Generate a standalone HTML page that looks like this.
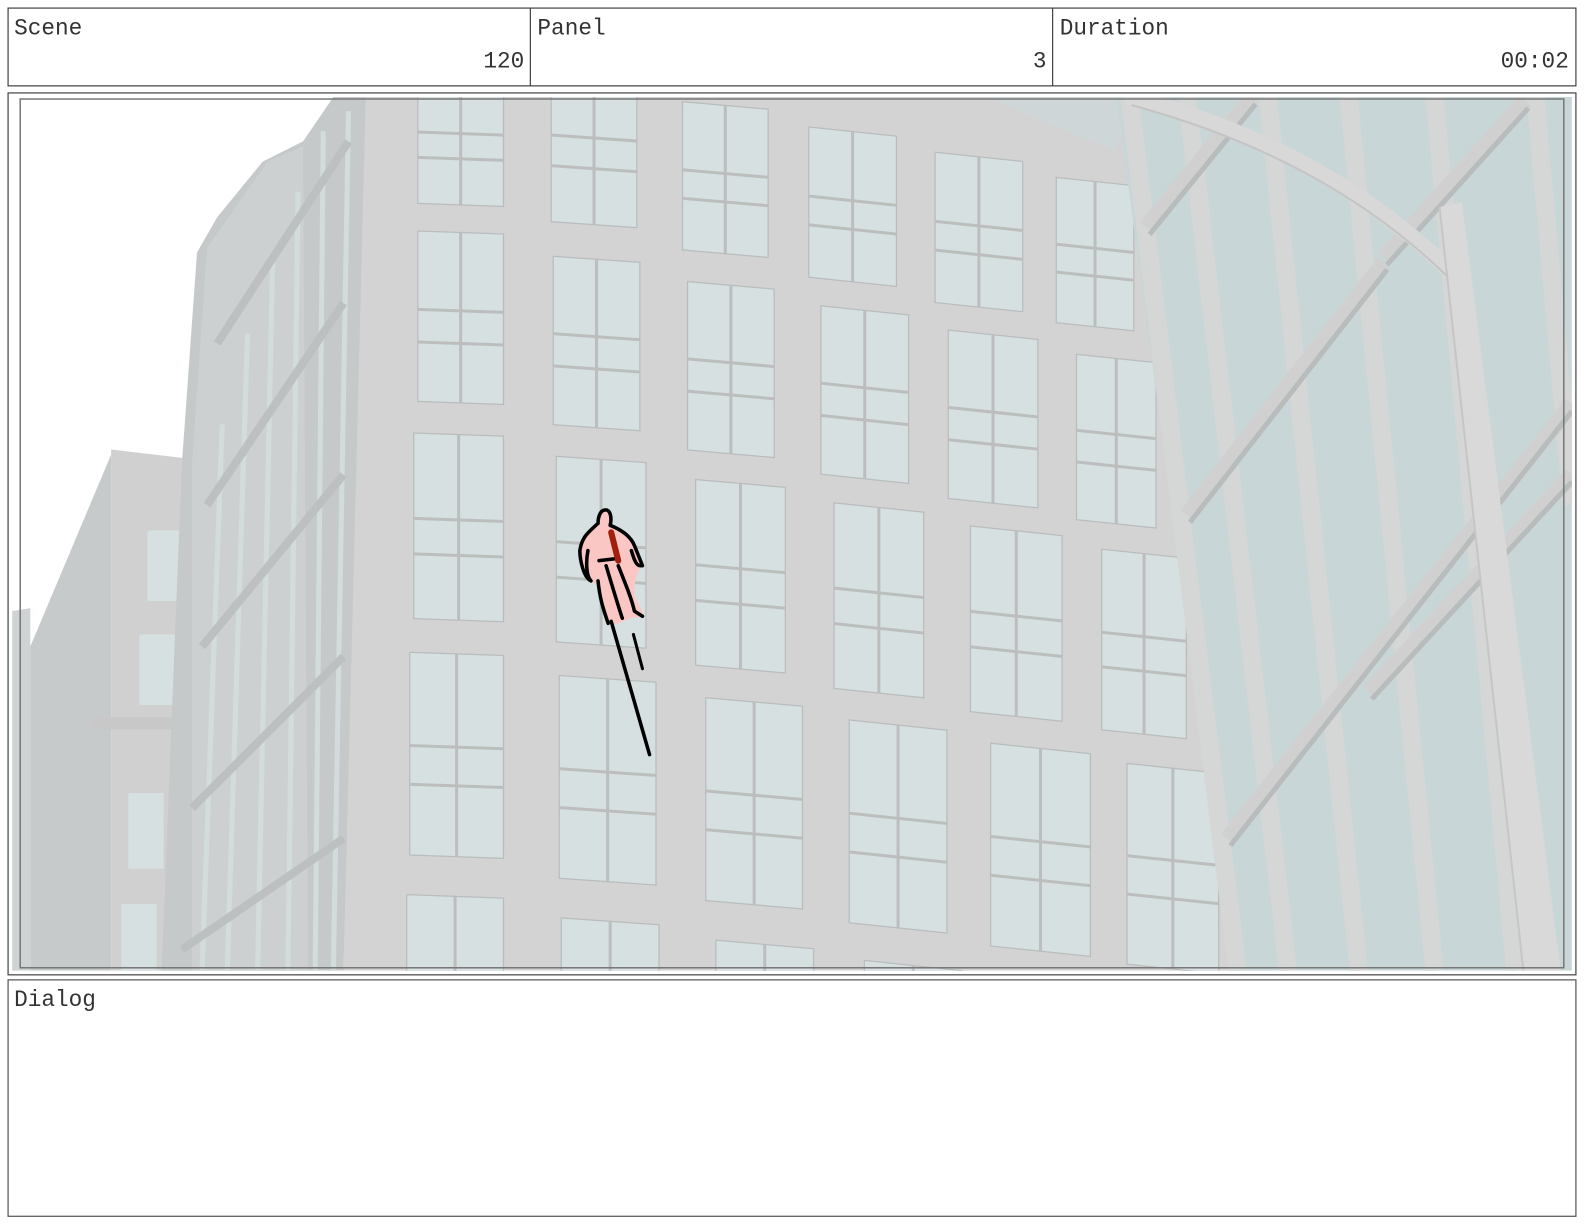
<!DOCTYPE html>
<html><head><meta charset="utf-8"><style>html,body{margin:0;padding:0;background:#fff;width:1584px;height:1224px;overflow:hidden}svg{display:block}</style></head>
<body>
<svg width="1584" height="1224" viewBox="0 0 1584 1224" xmlns="http://www.w3.org/2000/svg">
<defs>
<symbol id="w" viewBox="0 0 90 200" preserveAspectRatio="none">
<rect x="0" y="0" width="90" height="200" fill="#d6e0e1" stroke="#b9bcbc" stroke-width="2.5" vector-effect="non-scaling-stroke"/>
<line x1="45" y1="0" x2="45" y2="200" stroke="#bcbebe" stroke-width="3" vector-effect="non-scaling-stroke"/>
<line x1="0" y1="92" x2="90" y2="92" stroke="#bcbebe" stroke-width="3" vector-effect="non-scaling-stroke"/>
<line x1="0" y1="130" x2="90" y2="130" stroke="#bcbebe" stroke-width="3" vector-effect="non-scaling-stroke"/>
</symbol>
<clipPath id="c"><rect x="12" y="96" width="1544" height="865"/></clipPath>
</defs>
<g transform="scale(1.0102)">
<rect x="8" y="8" width="1552" height="77" fill="#fff" stroke="#444" stroke-width="1.2"/>
<line x1="525" y1="8" x2="525" y2="85" stroke="#444" stroke-width="1.2"/>
<line x1="1042" y1="8" x2="1042" y2="85" stroke="#444" stroke-width="1.2"/>
<rect x="8" y="92" width="1552" height="873" fill="#fff" stroke="#444" stroke-width="1.2"/>
<rect x="8" y="970" width="1552" height="234" fill="#fff" stroke="#555" stroke-width="1.2"/>
<g font-family="Liberation Mono, monospace" font-size="22.5" fill="#333">
<text x="14" y="34">Scene</text><text x="519" y="67" text-anchor="end">120</text>
<text x="532" y="34">Panel</text><text x="1036" y="67" text-anchor="end">3</text>
<text x="1049" y="34">Duration</text><text x="1553" y="67" text-anchor="end">00:02</text>
<text x="14" y="996">Dialog</text>
</g>
<g clip-path="url(#c)">
<rect x="12" y="96" width="1544" height="865" fill="#fff"/>
<polygon points="12,605 30,602 30,961 12,961" fill="#cfd3d3"/>
<polygon points="30,640 110,450 110,961 30,961" fill="#c6caca"/>
<polygon points="110,445 195,455 195,961 110,961" fill="#d0d0d0"/>
<g fill="#d6e0e1"><rect x="146" y="525" width="32" height="70"/><rect x="138" y="628" width="35" height="70"/><rect x="127" y="785" width="35" height="75"/><rect x="120" y="895" width="35" height="66"/></g>
<rect x="90" y="710" width="80" height="12" fill="#c8c8c8"/>
<polygon points="195,250 215,215 260,160 300,140 330,96 365,96 340,961 160,961 180,460" fill="#c5c9c9"/>
<polygon points="205,245 265,160 300,145 305,961 190,961 190,460" fill="#cdd0d0"/>
<g stroke="#d2dcdd" stroke-width="5">
<line x1="220" y1="420" x2="200" y2="960"/><line x1="245" y1="330" x2="225" y2="960"/><line x1="270" y1="250" x2="255" y2="960"/><line x1="295" y1="190" x2="285" y2="960"/><line x1="320" y1="130" x2="312" y2="960"/><line x1="345" y1="110" x2="330" y2="960"/></g>
<g stroke="#bcc0c0" stroke-width="8">
<line x1="205" y1="500" x2="340" y2="300"/><line x1="200" y1="640" x2="340" y2="470"/><line x1="190" y1="800" x2="340" y2="650"/><line x1="180" y1="940" x2="340" y2="830"/><line x1="215" y1="340" x2="345" y2="140"/></g>
<polygon points="362,96 1150,96 1260,961 340,961" fill="#d3d3d3"/>
<polygon points="975,96 1115,96 1105,150" fill="#cfd6d7"/>
<g>
<g transform="translate(413,70) skewY(2)"><use href="#w" width="86" height="132"/></g>
<g transform="translate(545,60) skewY(4)"><use href="#w" width="86" height="160"/></g>
<g transform="translate(675,100) skewY(5)"><use href="#w" width="86" height="148"/></g>
<g transform="translate(800,125) skewY(6)"><use href="#w" width="88" height="150"/></g>
<g transform="translate(925,150) skewY(6)"><use href="#w" width="88" height="150"/></g>
<g transform="translate(1045,175) skewY(6)"><use href="#w" width="78" height="145"/></g>
<g transform="translate(413,228) skewY(2)"><use href="#w" width="86" height="170"/></g>
<g transform="translate(547,253) skewY(4)"><use href="#w" width="87" height="168"/></g>
<g transform="translate(680,278) skewY(5)"><use href="#w" width="87" height="168"/></g>
<g transform="translate(812,302) skewY(6)"><use href="#w" width="88" height="168"/></g>
<g transform="translate(938,326) skewY(6)"><use href="#w" width="90" height="168"/></g>
<g transform="translate(1065,350) skewY(6)"><use href="#w" width="80" height="165"/></g>
<g transform="translate(409,428) skewY(2)"><use href="#w" width="90" height="185"/></g>
<g transform="translate(550,451) skewY(4)"><use href="#w" width="90" height="185"/></g>
<g transform="translate(688,474) skewY(5)"><use href="#w" width="90" height="185"/></g>
<g transform="translate(825,497) skewY(6)"><use href="#w" width="90" height="185"/></g>
<g transform="translate(960,520) skewY(6)"><use href="#w" width="92" height="185"/></g>
<g transform="translate(1090,543) skewY(6)"><use href="#w" width="85" height="180"/></g>
<g transform="translate(405,645) skewY(2)"><use href="#w" width="94" height="202"/></g>
<g transform="translate(553,668) skewY(4)"><use href="#w" width="97" height="202"/></g>
<g transform="translate(698,690) skewY(5)"><use href="#w" width="97" height="202"/></g>
<g transform="translate(840,712) skewY(6)"><use href="#w" width="98" height="202"/></g>
<g transform="translate(980,735) skewY(6)"><use href="#w" width="100" height="202"/></g>
<g transform="translate(1115,755) skewY(6)"><use href="#w" width="92" height="200"/></g>
<g transform="translate(402,885) skewY(2)"><use href="#w" width="97" height="202"/></g>
<g transform="translate(555,908) skewY(4)"><use href="#w" width="98" height="202"/></g>
<g transform="translate(708,930) skewY(5)"><use href="#w" width="98" height="202"/></g>
<g transform="translate(855,950) skewY(6)"><use href="#w" width="98" height="202"/></g>
</g>
<polygon points="1105,96 1556,96 1556,961 1222,961" fill="#c9d6d7"/>
<g stroke="#d5d6d6" stroke-width="18">
<line x1="1118" y1="96" x2="1225" y2="961"/>
<line x1="1175" y1="96" x2="1275" y2="961"/>
<line x1="1255" y1="96" x2="1345" y2="961"/>
<line x1="1335" y1="96" x2="1420" y2="961"/>
<line x1="1420" y1="96" x2="1500" y2="961"/>
<line x1="1520" y1="96" x2="1556" y2="500"/>
</g>
<g stroke="#d0d0d0" stroke-width="16">
<line x1="1135" y1="225" x2="1240" y2="96"/><line x1="1175" y1="510" x2="1370" y2="260"/><line x1="1215" y1="830" x2="1556" y2="400"/><line x1="1370" y1="255" x2="1510" y2="100"/><line x1="1355" y1="685" x2="1556" y2="470"/>
</g>
<g stroke="#b8bcbc" stroke-width="5">
<line x1="1138" y1="232" x2="1243" y2="103"/><line x1="1178" y1="517" x2="1373" y2="267"/><line x1="1218" y1="837" x2="1556" y2="407"/><line x1="1358" y1="692" x2="1556" y2="477"/><line x1="1373" y1="262" x2="1513" y2="107"/>
</g>
<path d="M1120,96 Q1320,150 1442,275" fill="none" stroke="#d8d8d8" stroke-width="16" stroke-linecap="round"/>
<path d="M1120,96 Q1320,150 1442,275" fill="none" stroke="#c4c4c4" stroke-width="2" transform="translate(0,8)"/>
<polygon points="1425,205 1447,200 1545,961 1508,961" fill="#d9d9d9"/>
<line x1="1425" y1="205" x2="1508" y2="961" stroke="#c6c6c6" stroke-width="2"/>
<path d="M598,505 C604,503 606,512 604,520 C614,524 624,530 628,540 L636,560 C630,566 628,575 628,590 C632,598 636,605 638,610 L625,612 C620,612 618,616 608,618 L600,612 C596,600 592,595 592,580 L585,575 C578,572 574,555 574,545 C576,530 585,525 592,518 C592,512 594,506 598,505 Z" fill="#fbc7c4"/>
<path d="M598,505 C604,503 606,512 604,520 M604,520 C614,524 624,530 628,540 L636,560 M592,518 C585,525 576,530 574,545 C574,555 578,572 585,575 M592,518 C592,512 594,506 598,505 M592,575 C594,595 598,605 602,617 M600,560 C606,580 612,600 616,612 M612,560 C620,580 626,595 628,605 L636,610 M582,545 C580,555 580,570 585,575 M625,545 C628,555 630,560 634,560 M593,555 L610,553" fill="none" stroke="#000" stroke-width="3.5" stroke-linecap="round" stroke-linejoin="round"/>
<line x1="605" y1="527" x2="612" y2="555" stroke="#a02010" stroke-width="6" stroke-linecap="round"/>
<line x1="605" y1="615" x2="643" y2="747" stroke="#000" stroke-width="3.5" stroke-linecap="round"/>
<line x1="627" y1="628" x2="636" y2="662" stroke="#000" stroke-width="3" stroke-linecap="round"/>
</g>
<rect x="20" y="98" width="1528" height="860" fill="none" stroke="#777" stroke-width="1.5"/>
</g>
</svg>
</body></html>
